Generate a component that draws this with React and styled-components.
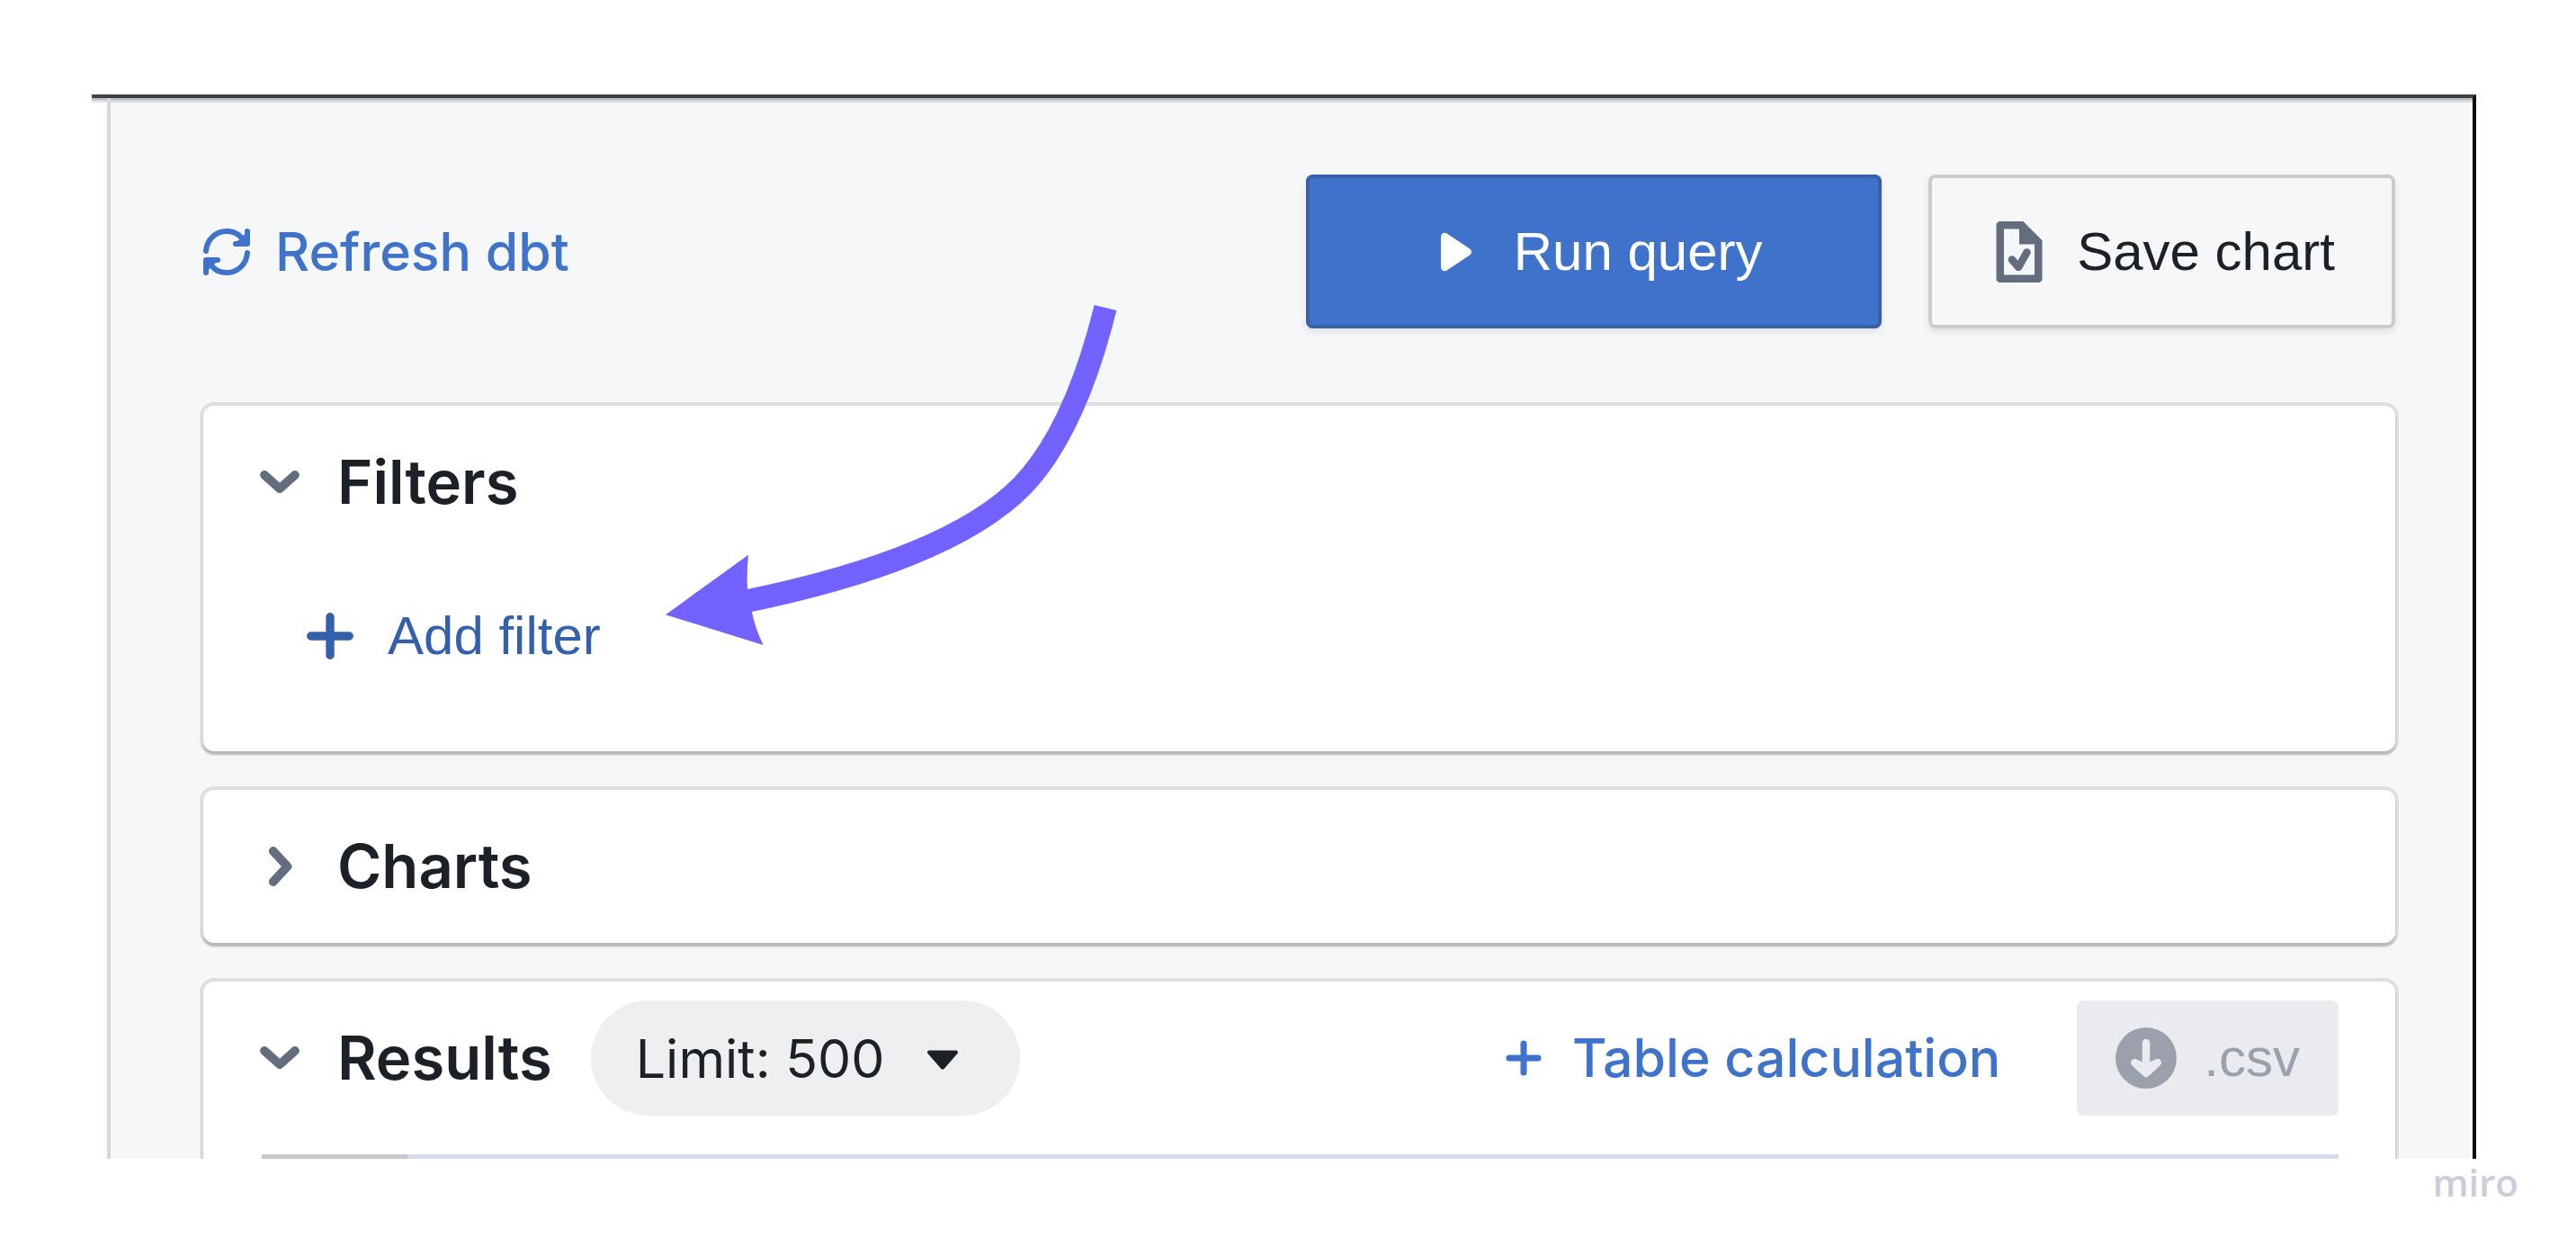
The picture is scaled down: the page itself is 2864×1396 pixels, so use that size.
import React from 'react';
import styled, { createGlobalStyle, css } from 'styled-components';

const UI = "Inter, 'Liberation Sans', sans-serif";
const CONTROL = "'Liberation Sans', Arial, sans-serif";

const GlobalStyle = createGlobalStyle`
  *, *::before, *::after { box-sizing: border-box; }
  body { margin: 0; background: #fff; font-family: ${UI}; color: #1c2127; }
  button, select { font: inherit; color: inherit; margin: 0; border: 0; background: none; cursor: pointer; }
  button:disabled { cursor: not-allowed; }
`;

const Page = styled.div`
  display: flex;
  flex-direction: column;
  padding: 105px 64px 56px 102px;
`;

const barShadow = 'linear-gradient(#b0b1b5, rgba(176, 177, 181, 0)) 0 0 / 100% 6px no-repeat';

const Frame = styled.main`
  position: relative;
  margin-right: 47px;
  border-top: 4px solid #3b424a;
  border-right: 4px solid #0c0a0b;
  padding-left: 17px;
  background: ${barShadow};
`;

const Panel = styled.div`
  display: flex;
  flex-direction: column;
  gap: 86px;
  padding: 85px 86px 0 103px;
  border-left: 4px solid #d6d8da;
  background: ${barShadow}, #f5f7f9;
`;

const Toolbar = styled.div`
  display: flex;
  justify-content: space-between;
  align-items: center;
`;

const Actions = styled.div`
  display: flex;
  gap: 52px;
`;

const Icon = styled.svg`
  width: 68px;
  height: 68px;
  flex: none;
  fill: currentColor;
`;

const SmallIcon = styled(Icon)`
  width: 52px;
  height: 52px;
`;

const LinkButton = styled.button`
  display: flex;
  align-items: center;
  gap: 28px;
  padding: 0;
  font-size: 59px;
  line-height: 72px;
  font-weight: 500;
  color: #3f72cb;
`;

const Button = styled.button`
  display: flex;
  align-items: center;
  justify-content: center;
  gap: 30px;
  height: ${(p) => (p.$large ? 171 : 128)}px;
  padding: 0 ${(p) => (p.$large ? 67 : 43)}px;
  border-radius: 8px;
  font-family: ${CONTROL};
  font-size: 60px;
  line-height: 72px;

  ${(p) => p.$kind === 'primary' && css`
    width: 640px;
    background: #3f72cb;
    color: #fff;
    box-shadow: inset 0 0 0 4px #3962a6, 0 4px 8px rgba(17, 20, 24, 0.1);
  `}
  ${(p) => p.$kind === 'outline' && css`
    background: #f5f7f9;
    box-shadow: inset 0 0 0 4px #c9cbcd, 0 4px 8px rgba(17, 20, 24, 0.1);
    ${Icon} { color: #636d7d; }
  `}
  ${(p) => p.$kind === 'minimal' && css`
    align-self: flex-start;
    color: #335fab;
  `}
  ${(p) => p.$kind === 'muted' && css`
    background: #e9ebee;
    color: #9aa1ac;
  `}
`;

const Cards = styled.div`
  display: flex;
  flex-direction: column;
  gap: 43px;
`;

const Card = styled.section`
  border-radius: ${(p) => (p.$cut ? '12px 12px 0 0' : '12px')};
  background: #fff;
  box-shadow: 0 0 0 4px rgba(17, 20, 24, 0.1), 0 4px 3px rgba(17, 20, 24, 0.2);
  clip-path: ${(p) => (p.$cut ? 'inset(-4px -6px 0 -6px)' : 'none')};
`;

const CardHeader = styled.header`
  display: flex;
  align-items: center;
  min-height: 170px;
  padding: 21px 63px 21px 51px;
`;

const Toggle = styled.button`
  display: flex;
  align-items: center;
  gap: 30px;
  padding: 0;
  ${Icon} { color: #636d7d; }
`;

const Title = styled.span`
  font-size: 67px;
  line-height: 80px;
  font-weight: 600;
`;

const CardBody = styled.div`
  display: flex;
  flex-direction: column;
  padding: 22px 64px 64px;
`;

const Limit = styled.label`
  display: inline-grid;
  align-items: center;
  height: 128px;
  margin-left: 43px;
  border-radius: 64px;
  background: #eeeff1;
  & > * { grid-area: 1 / 1; }
  ${Icon} { justify-self: end; margin-right: 52px; pointer-events: none; }
`;

const LimitSelect = styled.select`
  appearance: none;
  height: 128px;
  padding: 0 150px 0 50px;
  border-radius: 64px;
  font-size: 59px;
`;

const HeaderActions = styled.div`
  display: flex;
  align-items: center;
  gap: 85px;
  margin-left: auto;
`;

const ResultsTable = styled.div`
  display: grid;
  grid-template-columns: 162px 1fr;
  margin: 22px 63px 0 65px;
`;

const ColumnEdge = styled.div`
  height: 5px;
  background: ${(p) => (p.$metric ? '#d5dbe9' : '#c5c9ce')};
`;

const Arrow = styled.svg`
  position: absolute;
  left: 638px;
  top: 229px;
  width: 503px;
  height: 381px;
  pointer-events: none;
`;

const Brand = styled.footer`
  align-self: flex-end;
  font-family: 'Open Sans', sans-serif;
  font-weight: 600;
  font-size: 42px;
  line-height: 52px;
  color: #cfccd9;
`;

const RefreshIcon = () => (
  <SmallIcon viewBox="0 0 52 52" aria-hidden="true">
    <g stroke="currentColor" strokeWidth="6" strokeLinecap="round" strokeLinejoin="round">
      <path fill="none" d="M3 25C4 12 14 3 26 3c8 0 15 4 19 11" />
      <path d="M49 3v14H36M49 17l-9-1 9-6z" />
      <path fill="none" d="M49 27c-1 13-11 22-23 22-8 0-15-4-19-11" />
      <path d="M3 49V35h13M3 35l9 1-9 6z" />
    </g>
  </SmallIcon>
);

const PlayIcon = () => (
  <Icon viewBox="0 0 16 16" aria-hidden="true">
    <path d="M12 8c0-.35-.19-.64-.46-.82l.01-.02-6-4-.01.02A.969.969 0 0 0 5 3c-.55 0-1 .45-1 1v8c0 .55.45 1 1 1 .21 0 .39-.08.54-.18l.01.02 6-4-.01-.02c.27-.18.46-.47.46-.82z" />
  </Icon>
);

const SavedIcon = () => (
  <Icon viewBox="0 0 16 16" aria-hidden="true">
    <path fillRule="evenodd" d="M9 0H3c-.55 0-1 .45-1 1v14c0 .55.45 1 1 1h10c.55 0 1-.45 1-1V5L9 0zM12 14H4V2h4v4h4v8z" />
    <path d="M6.100 10l1.700 2L10 8.100" fill="none" stroke="currentColor" strokeWidth="2" strokeLinecap="round" strokeLinejoin="round" />
  </Icon>
);

const ChevronIcon = ({ open }) => (
  <Icon viewBox="0 0 16 16" aria-hidden="true">
    <path
      d={open ? 'M4 6.100L8 9.700l4-3.600' : 'M6.300 4L10 8l-3.700 4'}
      fill="none" stroke="currentColor" strokeWidth="2.300" strokeLinecap="round" strokeLinejoin="round"
    />
  </Icon>
);

const PlusIcon = () => (
  <Icon viewBox="0 0 16 16" aria-hidden="true">
    <path d="M8 3v10M3 8h10" fill="none" stroke="currentColor" strokeWidth="2.200" strokeLinecap="round" />
  </Icon>
);

const ThinPlusIcon = () => (
  <SmallIcon viewBox="0 0 52 52" aria-hidden="true">
    <path d="M26 10v32M10 26h32" fill="none" stroke="currentColor" strokeWidth="7" strokeLinecap="round" />
  </SmallIcon>
);

const CaretIcon = () => (
  <Icon viewBox="0 0 16 16" aria-hidden="true">
    <path d="M12 6.500c0-.28-.22-.5-.5-.5h-7a.495.495 0 0 0-.37.830l3.500 4c.09.100.22.170.37.170s.28-.07.370-.170l3.500-4c.08-.09.130-.200.130-.330z" />
  </Icon>
);

const DownloadIcon = () => (
  <Icon viewBox="0 0 16 16" aria-hidden="true">
    <circle cx="8" cy="8" r="8" />
    <path d="M8 4v7" fill="none" stroke="#e9ebee" strokeWidth="2" strokeLinecap="round" />
    <path d="M5 9.200l3 2.800 3-2.800-3 1.300z" fill="#e9ebee" stroke="#e9ebee" strokeWidth="2" strokeLinecap="round" strokeLinejoin="round" />
  </Icon>
);

export default function App() {
  return (
    <>
      <GlobalStyle />
      <Page>
        <Frame>
          <Panel>
            <Toolbar>
              <LinkButton type="button"><RefreshIcon />Refresh dbt</LinkButton>
              <Actions>
                <Button type="button" $large $kind="primary"><PlayIcon />Run query</Button>
                <Button type="button" $large $kind="outline"><SavedIcon />Save chart</Button>
              </Actions>
            </Toolbar>
            <Cards>
              <Card>
                <CardHeader>
                  <Toggle type="button" aria-expanded="true"><ChevronIcon open /><Title>Filters</Title></Toggle>
                </CardHeader>
                <CardBody>
                  <Button type="button" $kind="minimal"><PlusIcon />Add filter</Button>
                </CardBody>
              </Card>
              <Card>
                <CardHeader>
                  <Toggle type="button" aria-expanded="false"><ChevronIcon /><Title>Charts</Title></Toggle>
                </CardHeader>
              </Card>
              <Card $cut>
                <CardHeader>
                  <Toggle type="button" aria-expanded="true"><ChevronIcon open /><Title>Results</Title></Toggle>
                  <Limit>
                    <LimitSelect aria-label="Row limit" defaultValue="500">
                      <option value="500">Limit: 500</option>
                    </LimitSelect>
                    <CaretIcon />
                  </Limit>
                  <HeaderActions>
                    <LinkButton type="button"><ThinPlusIcon />Table calculation</LinkButton>
                    <Button type="button" $kind="muted" disabled><DownloadIcon />.csv</Button>
                  </HeaderActions>
                </CardHeader>
                <ResultsTable>
                  <ColumnEdge />
                  <ColumnEdge $metric />
                </ResultsTable>
              </Card>
            </Cards>
          </Panel>
          <Arrow viewBox="740 338 503 381" aria-hidden="true">
            <path d="M1229 342Q1195 479 1136.500 540Q1056 622 826 669" fill="none" stroke="#7262ff" strokeWidth="25.500" />
            <path d="M740 683.300L832 616.700Q830 636 831 655L836 680.500Q840 700 848.700 717Z" fill="#7262ff" />
          </Arrow>
        </Frame>
        <Brand>miro</Brand>
      </Page>
    </>
  );
}
